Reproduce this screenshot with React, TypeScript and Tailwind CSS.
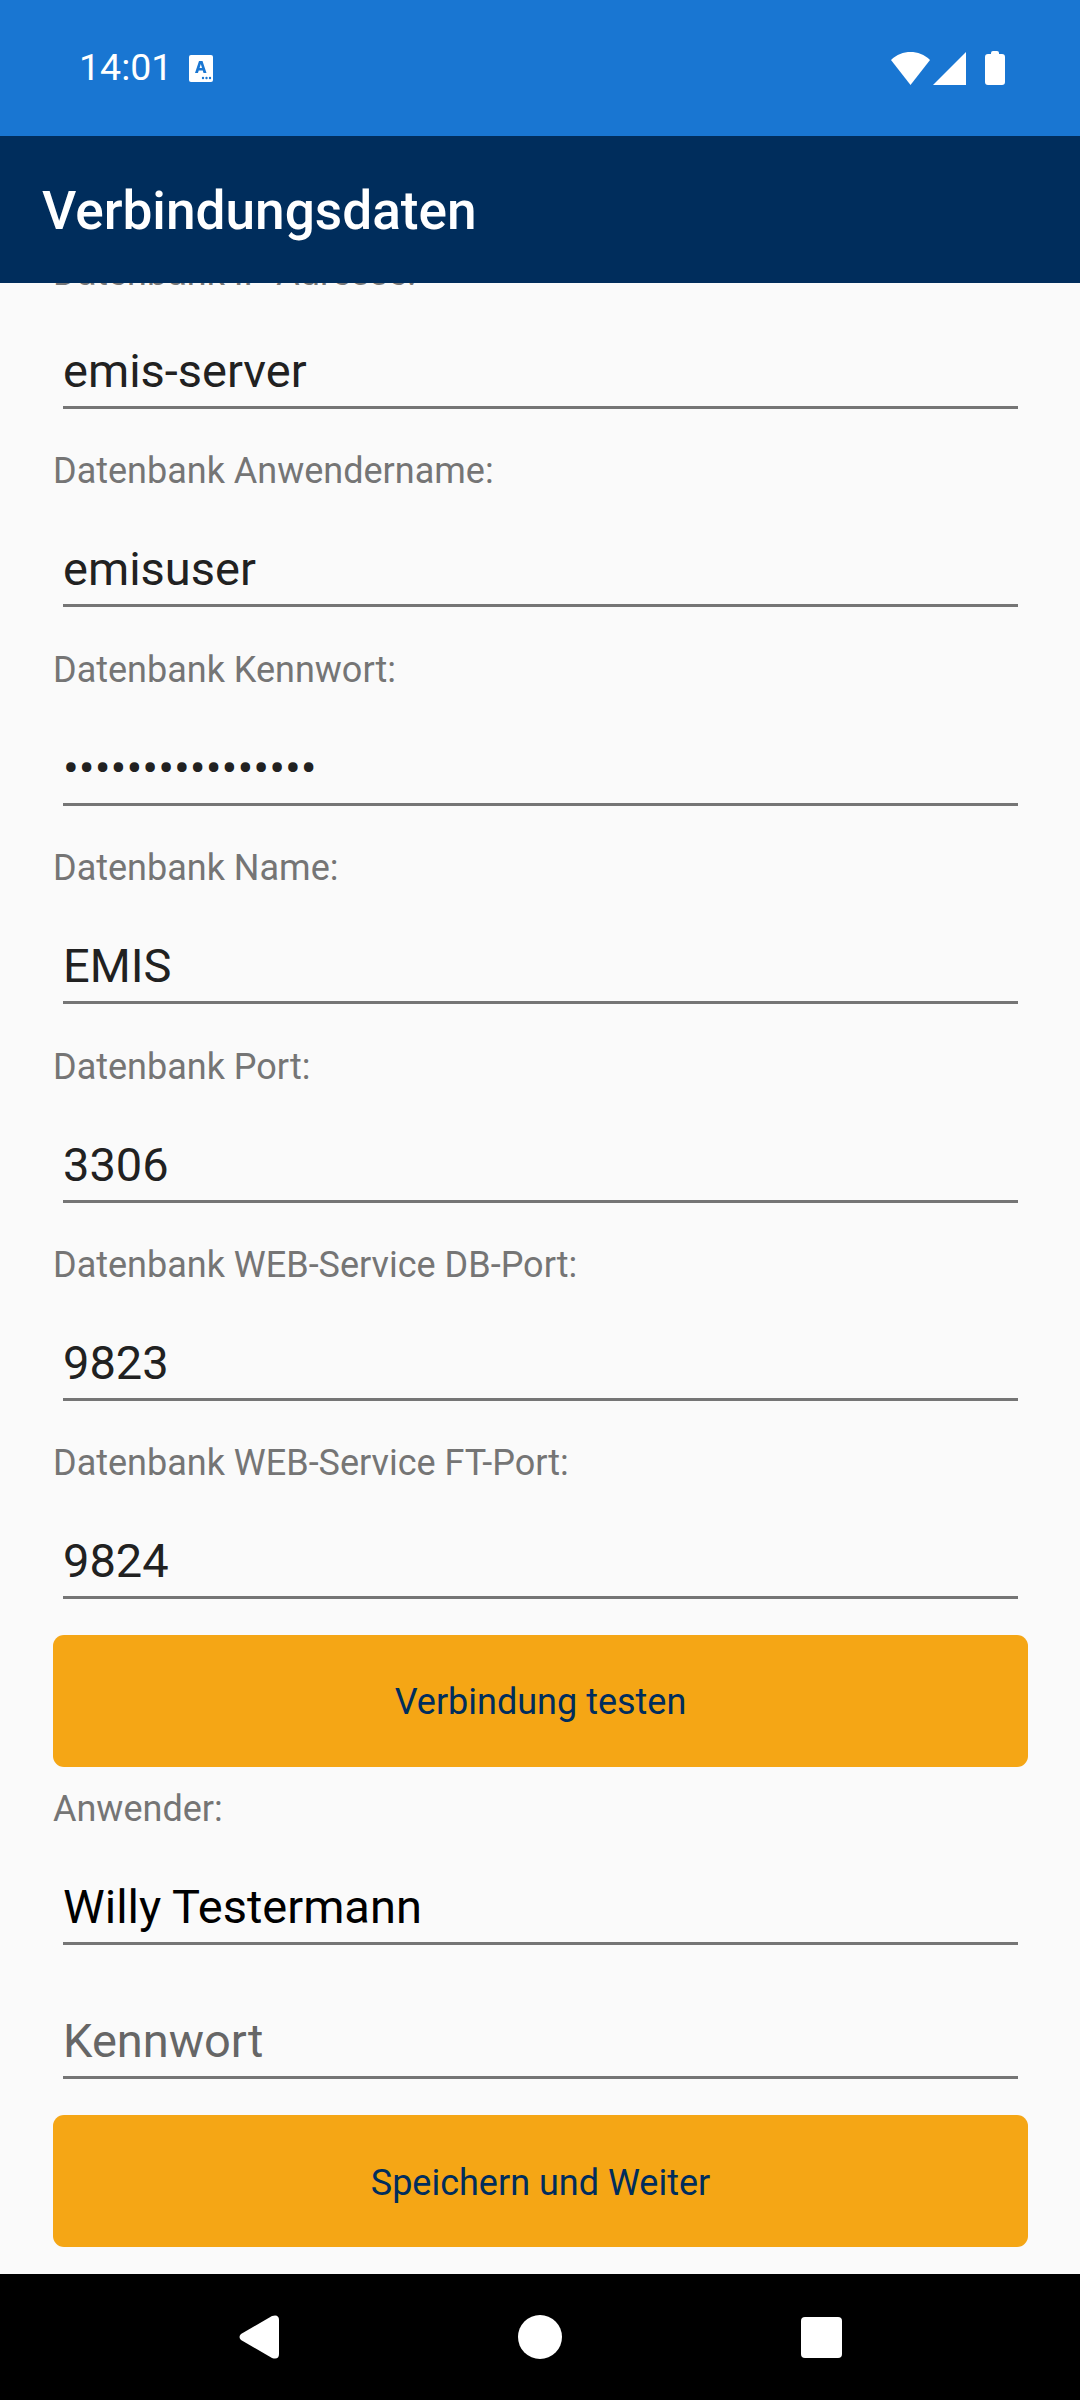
import React from 'react';

const fields = [
  { label: 'Datenbank IP-Adresse:', value: 'emis-server' },
  { label: 'Datenbank Anwendername:', value: 'emisuser' },
  { label: 'Datenbank Kennwort:', value: '••••••••••••••••' },
  { label: 'Datenbank Name:', value: 'EMIS' },
  { label: 'Datenbank Port:', value: '3306' },
  { label: 'Datenbank WEB-Service DB-Port:', value: '9823' },
  { label: 'Datenbank WEB-Service FT-Port:', value: '9824' },
];

const Field: React.FC<{ label: string; value: string; dark?: boolean }> = ({ label, value, dark }) => (
  <div className="h-[198.4px] flex flex-col">
    <div className="h-[46px] pl-[53px] text-[36px] leading-[46px] text-[#757575]">{label}</div>
    <div className={`mt-[45px] ml-[63px] mr-[62px] h-[60px] text-[47px] leading-[60px] whitespace-nowrap ${dark ? 'text-black' : 'text-[#212121]'}`}>{value}</div>
    <div className="ml-[63px] mr-[62px] mt-[5px] h-[3px] bg-[#757575]"></div>
  </div>
);

const ActionButton: React.FC<{ label: string }> = ({ label }) => (
  <button className="mx-[53px] w-[975px] h-[132px] pt-[3px] rounded-[11px] bg-[#f5a615] text-[#002d5c] text-[36px] flex items-center justify-center">
    {label}
  </button>
);

export default function App() {
  return (
    <div className="w-[1080px] h-[2400px] flex flex-col overflow-hidden bg-[#fafafa] font-['Roboto',sans-serif]">
      <div className="h-[136px] shrink-0 bg-[#1976d2] flex items-center pl-[79px] pr-[75px] text-white">
        <span className="text-[37.5px] leading-none">14:01</span>
        <svg className="ml-[17px]" width="24" height="27" viewBox="0 0 24 27">
          <rect width="24" height="27" rx="2" fill="#fff" />
          <path d="M6 18 L10 6 H13.5 L17.5 18 H14.5 L13.8 15.5 H9.7 L9 18 Z M10.6 13 H13 L11.8 9 Z" fill="#1976d2" fillRule="evenodd" />
          <circle cx="14" cy="23" r="1.2" fill="#1976d2" />
          <circle cx="17.5" cy="23" r="1.2" fill="#1976d2" />
          <circle cx="21" cy="23" r="1.2" fill="#1976d2" />
        </svg>
        <div className="ml-auto flex items-center">
          <svg width="39" height="33" viewBox="0 0 39 33">
            <path d="M0 8 C11 -2.6 28 -2.6 39 8 L19.5 33 Z" fill="#fff" />
          </svg>
          <svg className="ml-[3px]" width="33" height="33" viewBox="0 0 33 33">
            <path d="M0 33 L33 0 V33 Z" fill="#fff" />
          </svg>
          <svg className="ml-[19px]" width="20" height="34" viewBox="0 0 20 34">
            <path d="M6 2 Q6 0 8 0 H12 Q14 0 14 2 V3 H17 Q20 3 20 6 V31 Q20 34 17 34 H3 Q0 34 0 31 V6 Q0 3 3 3 H6 Z" fill="#fff" />
          </svg>
        </div>
      </div>

      <div className="h-[147px] shrink-0 bg-[#002d5c] flex items-center pl-[42px] pt-[5px] text-white text-[53.2px] font-medium z-10">
        Verbindungsdaten
      </div>

      <main className="flex-1 overflow-hidden">
        <div className="-mt-[33px]">
          {fields.map(f => <Field key={f.label} label={f.label} value={f.value} />)}
          <div className="-mt-[4px]"><ActionButton label="Verbindung testen" /></div>
          <div className="mt-[19px]"><Field label="Anwender:" value="Willy Testermann" dark /></div>
          <div className="mt-[27px] ml-[63px] mr-[62px] h-[60px] text-[47px] leading-[60px] text-[#666666]">Kennwort</div>
          <div className="ml-[63px] mr-[62px] mt-[5px] h-[3px] bg-[#757575]"></div>
          <div className="mt-[36px]"><ActionButton label="Speichern und Weiter" /></div>
        </div>
      </main>

      <nav className="h-[126px] shrink-0 bg-black flex items-center">
        <svg className="ml-[239px]" width="40" height="44" viewBox="0 0 40 44">
          <path d="M2 19 L33 1 Q40 -1 40 5 V39 Q40 45 33 43 L2 25 Q-1 22 2 19 Z" fill="#fff" />
        </svg>
        <div className="ml-[239px] w-[44px] h-[44px] rounded-full bg-white"></div>
        <div className="ml-[239px] w-[41px] h-[41px] rounded-[4px] bg-white"></div>
      </nav>
    </div>
  );
}
